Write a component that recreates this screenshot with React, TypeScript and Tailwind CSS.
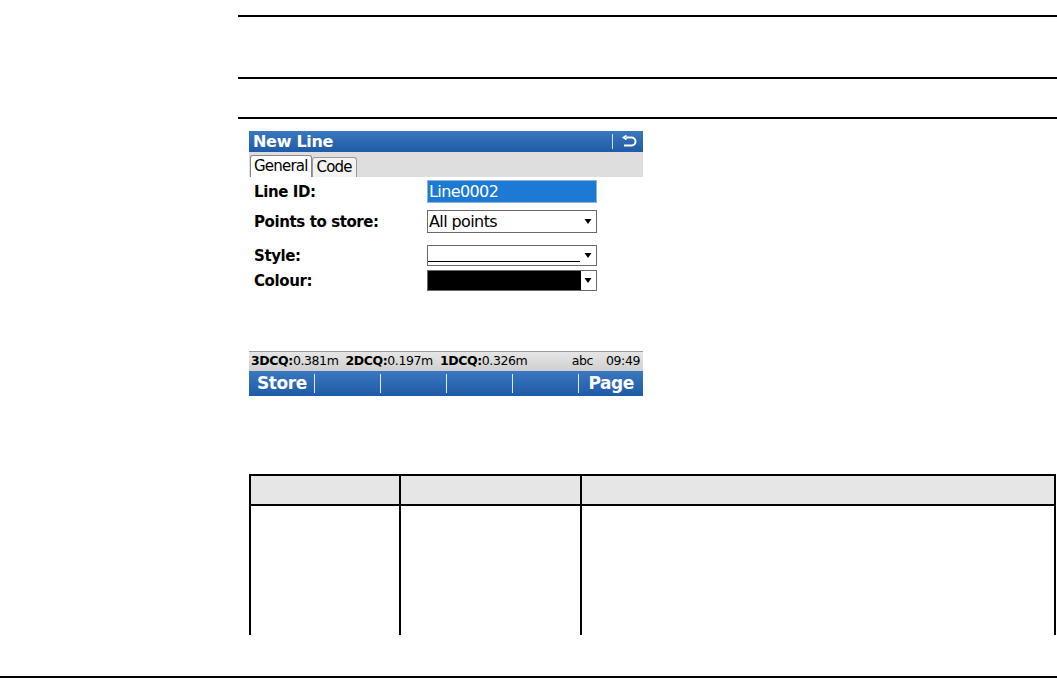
import React from 'react';

const font = { fontFamily: '"DejaVu Sans", Verdana, sans-serif' };

function Caret({ white = false }: { white?: boolean }) {
  return (
    <svg width="8" height="7" viewBox="0 0 8 7" className="shrink-0">
      <polygon points="0.5,1 7.5,1 4,6" fill={white ? '#fff' : '#000'} />
    </svg>
  );
}

function Screen() {
  return (
    <div className="w-[394px] h-[265px] flex flex-col bg-white overflow-hidden" style={font}>
      {/* Title bar */}
      <div className="h-[21px] flex items-center justify-between px-[4px] bg-gradient-to-b from-[#3a78c0] to-[#1f5aa6]">
        <span className="text-white font-bold text-[16px] leading-none tracking-[-0.3px]">New Line</span>
        <div className="flex items-center gap-[9px] pr-[2px]">
          <span className="w-px h-[15px] bg-white/80" />
          <svg width="15" height="14" viewBox="0 0 15 14" fill="none" stroke="#fff" strokeWidth="2">
            <path d="M4 2.5 H9.5 A4 4 0 0 1 9.5 10.5 H2" />
            <path d="M4.5 0.5 L1.5 2.5 L4.5 4.5" strokeWidth="1.7" />
          </svg>
        </div>
      </div>
      {/* Tabs */}
      <div className="h-[25px] bg-[#dedede] flex items-end pl-[1px]">
        <div className="h-[22px] px-[3px] bg-white border border-b-0 border-[#8a8a8a] rounded-t-[3px] flex items-center text-[15px] tracking-[-0.8px] leading-none">General</div>
        <div className="h-[20px] px-[4px] bg-[#f2f2f2] border border-b-0 border-[#9a9a9a] rounded-t-[3px] flex items-center text-[15px] tracking-[-0.8px] leading-none">Code</div>
      </div>
      {/* Body */}
      <div className="flex-1 flex flex-col pl-[5px] pt-[3px] text-[15px]">
        <div className="flex items-center h-[23px]">
          <span className="w-[173px] font-bold tracking-[-0.4px] pt-[2px]">Line ID:</span>
          <div className="w-[170px] h-[23px] bg-[#1c7ad4] border border-[#8fb3d9] text-white flex items-center px-[1px] text-[16px] tracking-[-0.6px]">Line0002</div>
        </div>
        <div className="flex items-center h-[23px] mt-[7px]">
          <span className="w-[173px] font-bold tracking-[-0.4px] pt-[2px]">Points to store:</span>
          <div className="w-[170px] h-[23px] border border-[#6a6a6a] flex items-center justify-between pl-[1px] pr-[4px] text-[16px] tracking-[-0.6px]">
            <span>All points</span>
            <Caret />
          </div>
        </div>
        <div className="flex items-center h-[21px] mt-[12px]">
          <span className="w-[173px] font-bold tracking-[-0.4px] pt-[2px]">Style:</span>
          <div className="w-[170px] h-[21px] border border-[#6a6a6a] flex items-center justify-between pr-[4px]">
            <div className="w-[152px] h-full flex items-end pb-[3px]">
              <div className="w-full h-px bg-black" />
            </div>
            <Caret />
          </div>
        </div>
        <div className="flex items-center h-[21px] mt-[4px]">
          <span className="w-[173px] font-bold tracking-[-0.4px] pt-[2px]">Colour:</span>
          <div className="w-[170px] h-[21px] border border-[#6a6a6a] flex items-center justify-between pr-[4px]">
            <div className="w-[153px] h-full bg-black" />
            <Caret />
          </div>
        </div>
      </div>
      {/* Status bar */}
      <div className="h-[20px] bg-gradient-to-b from-[#e6e6e6] to-[#cfcfcf] border-t border-[#9a9a9a] flex items-center justify-between pl-[2px] pr-[3px] text-[12.5px] tracking-[-0.4px] leading-none">
        <div className="flex gap-[7px]">
          <span><b>3DCQ:</b>0.381m</span>
          <span><b>2DCQ:</b>0.197m</span>
          <span><b>1DCQ:</b>0.326m</span>
        </div>
        <div className="flex gap-[13px]">
          <span>abc</span>
          <span>09:49</span>
        </div>
      </div>
      {/* Softkeys */}
      <div className="h-[25px] bg-gradient-to-b from-[#3a78c0] to-[#1f5aa6] flex items-center text-white font-bold text-[17px] tracking-[-0.4px] leading-none">
        {['Store', '', '', '', '', 'Page'].map((k, i) => (
          <div key={i} className={`h-[25px] flex items-center ${i === 5 ? 'flex-1 justify-end pr-[9px]' : 'w-[66px]'}`}>
            {i < 5 && <span className="flex-1 pl-[8px]">{k}</span>}
            {i < 5 && <span className="w-px h-[19px] bg-white/85" />}
            {i === 5 && k}
          </div>
        ))}
      </div>
    </div>
  );
}

export default function App() {
  return (
    <div className="relative w-[1057px] h-[679px] bg-white overflow-hidden">
      <div className="pl-[238px]">
        <div className="pt-[15px]">
          <div className="h-[2px] bg-black" />
          <div className="h-[60px]" />
          <div className="h-[2px] bg-black" />
          <div className="h-[38px]" />
          <div className="h-[2px] bg-black" />
        </div>
        <div className="pl-[11px] pt-[12px]">
          <Screen />
        </div>
        <div className="pl-[11px] pt-[78px]">
          <div className="w-[807px] h-[161px] border-t-2 border-l-2 border-r-2 border-black grid grid-cols-[150px_181px_1fr]">
            <div className="h-[30px] bg-[#e6e6e6] border-b-2 border-r-2 border-black" />
            <div className="h-[30px] bg-[#e6e6e6] border-b-2 border-r-2 border-black" />
            <div className="h-[30px] bg-[#e6e6e6] border-b-2 border-black" />
            <div className="h-[129px] border-r-2 border-black" />
            <div className="h-[129px] border-r-2 border-black" />
            <div className="h-[129px]" />
          </div>
        </div>
      </div>
      <div className="absolute left-0 right-0 top-[676px] h-[2px] bg-black" />
    </div>
  );
}
